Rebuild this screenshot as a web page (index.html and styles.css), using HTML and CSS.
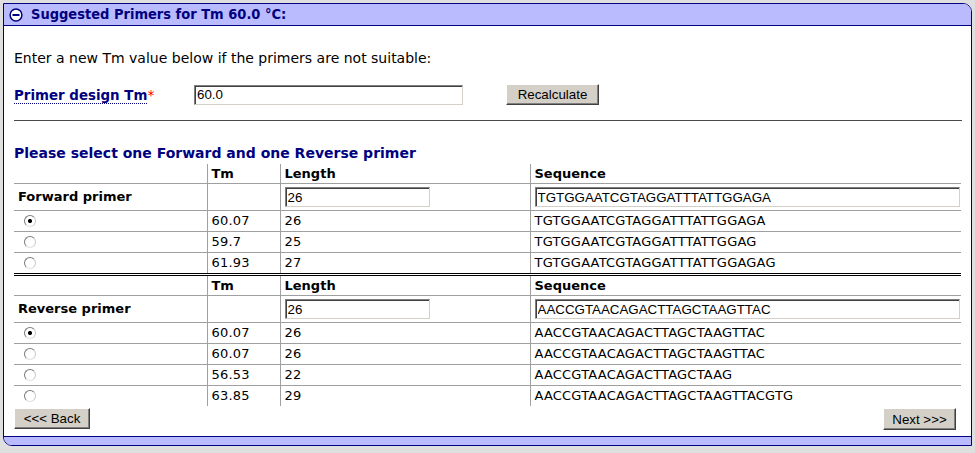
FILE: index.html
```html
<!DOCTYPE html>
<html>
<head>
<meta charset="utf-8">
<title>Suggested Primers</title>
<link rel="stylesheet" href="styles.css">
</head>
<body>
<div class="panel">
  <div class="panel-head">
    <svg class="toggle" width="14" height="14" viewBox="0 0 14 14"><circle cx="7" cy="7" r="5.9" fill="#fff" stroke="#000080" stroke-width="1.5"/><rect x="3.5" y="6" width="7" height="2" fill="#000080"/></svg>
    <span class="panel-title">Suggested Primers for Tm 60.0 °C:</span>
  </div>
  <div class="panel-body">
    <p class="intro">Enter a new Tm value below if the primers are not suitable:</p>
    <div class="tm-row">
      <label class="tm-label"><span class="dotted">Primer design Tm</span><span class="req">*</span></label>
      <input class="field tm-input" type="text" value="60.0">
      <button class="btn recalc">Recalculate</button>
    </div>
    <hr class="rule">
    <h2 class="section-title">Please select one Forward and one Reverse primer</h2>
    <table class="primers">
      <colgroup><col class="c1"><col class="c2"><col class="c3"><col class="c4"></colgroup>
      <tbody>
        <tr class="head"><th></th><th>Tm</th><th>Length</th><th>Sequence</th></tr>
        <tr class="edit"><th>Forward primer</th><td></td><td><input class="field len" type="text" value="26"></td><td><input class="field seq" type="text" value="TGTGGAATCGTAGGATTTATTGGAGA"></td></tr>
        <tr><td><input class="radio" type="radio" name="fwd" checked></td><td>60.07</td><td>26</td><td>TGTGGAATCGTAGGATTTATTGGAGA</td></tr>
        <tr><td><input class="radio" type="radio" name="fwd"></td><td>59.7</td><td>25</td><td>TGTGGAATCGTAGGATTTATTGGAG</td></tr>
        <tr class="last"><td><input class="radio" type="radio" name="fwd"></td><td>61.93</td><td>27</td><td>TGTGGAATCGTAGGATTTATTGGAGAG</td></tr>
      </tbody>
      <tbody>
        <tr class="head"><th></th><th>Tm</th><th>Length</th><th>Sequence</th></tr>
        <tr class="edit"><th>Reverse primer</th><td></td><td><input class="field len" type="text" value="26"></td><td><input class="field seq" type="text" value="AACCGTAACAGACTTAGCTAAGTTAC"></td></tr>
        <tr><td><input class="radio" type="radio" name="rev" checked></td><td>60.07</td><td>26</td><td>AACCGTAACAGACTTAGCTAAGTTAC</td></tr>
        <tr><td><input class="radio" type="radio" name="rev"></td><td>60.07</td><td>26</td><td>AACCGTAACAGACTTAGCTAAGTTAC</td></tr>
        <tr><td><input class="radio" type="radio" name="rev"></td><td>56.53</td><td>22</td><td>AACCGTAACAGACTTAGCTAAG</td></tr>
        <tr class="end"><td><input class="radio" type="radio" name="rev"></td><td>63.85</td><td>29</td><td>AACCGTAACAGACTTAGCTAAGTTACGTG</td></tr>
      </tbody>
    </table>
    <div class="nav">
      <button class="btn back">&lt;&lt;&lt; Back</button>
      <button class="btn next">Next &gt;&gt;&gt;</button>
    </div>
  </div>
  <div class="panel-foot"></div>
</div>
</body>
</html>
```

FILE: styles.css
```css
html, body {
  margin: 0;
  padding: 0;
}
body {
  background: #dfdfdf;
  font-family: "DejaVu Sans", Verdana, sans-serif;
  color: #000;
  padding: 3px;
  height: 453px;
  box-sizing: border-box;
}
.panel {
  border: 1px solid #000080;
  border-radius: 0 9px 0 9px;
  background: #fff;
  overflow: hidden;
}
.panel-head {
  display: flex;
  align-items: center;
  height: 21px;
  background: #babaff;
  border-bottom: 1px solid #000080;
  padding-left: 5px;
}
.toggle {
  display: block;
  flex: none;
}
.panel-title {
  margin-left: 8px;
  font-family: "DejaVu Sans Condensed", "DejaVu Sans", Verdana, sans-serif;
  font-weight: bold;
  font-size: 14.5px;
  color: #000080;
  line-height: 21px;
}
.panel-body {
  padding: 0 9px 6px 10px;
}
.intro {
  margin: 23px 0 0;
  font-size: 14px;
  line-height: 18px;
}
.tm-row {
  display: flex;
  align-items: center;
  height: 21px;
  margin-top: 17px;
}
.tm-label {
  width: 180px;
  flex: none;
  font-size: 13.4px;
  font-weight: bold;
  color: #000080;
}
.dotted {
  border-bottom: 1px dotted #000080;
}
.req {
  color: #f00;
  font-weight: normal;
  font-size: 14px;
}
.field {
  box-sizing: border-box;
  height: 20px;
  padding: 0 2px;
  margin: 0;
  font-family: "Liberation Sans", Arial, sans-serif;
  font-size: 13.33px;
  color: #000;
  background: #fff;
  border: 1px solid;
  border-color: #808080 #d4d0c8 #d4d0c8 #808080;
  box-shadow: inset 1px 1px 0 #404040;
  outline: none;
}
.tm-input {
  width: 269px;
}
.btn {
  box-sizing: border-box;
  height: 22px;
  margin: 0;
  padding: 0 6px;
  font-family: "Liberation Sans", Arial, sans-serif;
  font-size: 13.33px;
  color: #000;
  background: #d4d0c8;
  border: 1px solid;
  border-color: #fff #404040 #404040 #fff;
  box-shadow: inset -1px -1px 0 #808080;
}
.recalc {
  width: 93px;
  margin-left: 43px;
  height: 21px;
}
.rule {
  margin: 15px 0 0;
  height: 0;
  border: 0;
  border-top: 1px solid #4a4a4a;
}
.section-title {
  margin: 24px 0 0;
  font-size: 14px;
  line-height: 17px;
  color: #000080;
  font-weight: bold;
}
.primers {
  margin-top: 2px;
  width: 947px;
  border-collapse: collapse;
  table-layout: fixed;
  font-size: 13px;
}
.c1 { width: 193px; }
.c2 { width: 73px; }
.c3 { width: 250px; }
.c4 { width: 431px; }
.primers th,
.primers td {
  padding: 0 1px 0 4px;
  text-align: left;
  vertical-align: middle;
  border-bottom: 1px solid #a0a0a0;
  border-left: 1px solid #a0a0a0;
  line-height: 20px;
  height: 20px;
  white-space: nowrap;
}
.primers td {
  letter-spacing: 0.2px;
}
.primers th:first-child,
.primers td:first-child {
  border-left: 0;
}
.primers th {
  font-weight: bold;
}
.primers .head th {
  line-height: 19px;
  height: 19px;
}
.primers .edit th,
.primers .edit td {
  height: 26px;
}
.primers .last td {
  border-bottom: 3px double #000;
}
.primers .end td {
  border-bottom: 0;
}
.len {
  width: 145px;
  display: block;
}
.seq {
  width: 100%;
  display: block;
  letter-spacing: 0;
}
.radio {
  -webkit-appearance: none;
  appearance: none;
  display: block;
  box-sizing: border-box;
  width: 12px;
  height: 12px;
  margin: 0 0 0 6px;
  border-radius: 50%;
  border: 1px solid;
  border-color: #7a7a7a #c8c8c8 #e0e0e0 #7a7a7a;
  background: #fff;
}
.radio:checked {
  background: radial-gradient(circle at 50% 50%, #000 0, #000 1.8px, #fff 2.3px);
}
.nav {
  display: flex;
  justify-content: space-between;
  margin-top: 2px;
  padding-right: 6px;
}
.back {
  width: 76px;
  height: 21px;
}
.next {
  width: 73px;
}
.panel-foot {
  height: 8px;
  background: #babaff;
  border-top: 1px solid #000080;
}
```
